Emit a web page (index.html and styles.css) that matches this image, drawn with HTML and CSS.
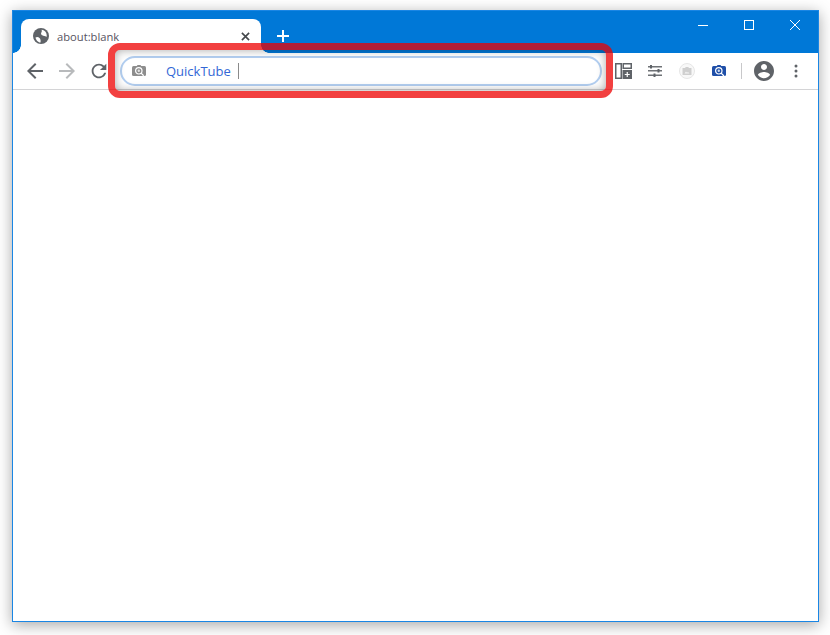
FILE: index.html
```html
<!DOCTYPE html>
<html lang="en">
<head>
    <meta charset="UTF-8">
    <title>about:blank</title>
    <link rel="stylesheet" href="styles.css">
</head>
<body>
    <div class="window">
        <!-- Title bar -->
        <div class="titlebar">
            <div class="tab">
                <svg class="tab-icon" viewBox="0 0 16 16"><circle cx="8" cy="8" r="8"/><path d="M2.500 9.500c1.500-1 3-.5 4 .5s1.500 2.500 1 4.500c-2.500 0-4.500-2.500-5-5zM8.500 1.800c2 .2 4 1.500 4.800 3.400.5 1.300.6 2.600.2 3.800-1.300-1.200-3-1-4.300-1.800-1.300-.7-1.500-2-.7-3 .5-.7.500-1.500 0-2.400z" class="land"/></svg>
                <span class="tab-title">about:blank</span>
                <svg class="tab-close" viewBox="0 0 10 10"><path d="M1 1l8 8M9 1l-8 8"/></svg>
            </div>
            <svg class="new-tab" viewBox="0 0 12 12"><path d="M6 0v12M0 6h12"/></svg>
            <div class="window-controls">
                <div class="win-btn"><svg viewBox="0 0 12 12"><path d="M1 6.500h10"/></svg></div>
                <div class="win-btn"><svg viewBox="0 0 12 12"><rect x="1.500" y="1.500" width="9" height="9"/></svg></div>
                <div class="win-btn"><svg viewBox="0 0 12 12"><path d="M1 1l10 10M11 1L1 11"/></svg></div>
            </div>
        </div>

        <!-- Toolbar -->
        <div class="toolbar">
            <div class="tool-btn"><svg class="nav-icon" viewBox="0 0 24 24"><path d="M20 11H7.830l5.590-5.590L12 4l-8 8 8 8 1.410-1.410L7.830 13H20v-2z"/></svg></div>
            <div class="tool-btn disabled"><svg class="nav-icon" viewBox="0 0 24 24"><path d="M4 11h12.170l-5.590-5.590L12 4l8 8-8 8-1.410-1.410L16.170 13H4v-2z"/></svg></div>
            <div class="tool-btn"><svg class="reload-icon" viewBox="0 0 24 24"><path d="M17.650 6.350A7.958 7.958 0 0 0 12 4c-4.420 0-7.990 3.580-7.990 8s3.570 8 7.990 8c3.730 0 6.840-2.550 7.730-6h-2.080A5.990 5.990 0 0 1 12 18c-3.310 0-6-2.690-6-6s2.690-6 6-6c1.660 0 3.140.690 4.220 1.780L13 11h7V4l-2.350 2.350z"/></svg></div>

            <div class="omnibox">
                <svg class="omni-icon" viewBox="0 0 14 12"><rect y="1" width="14" height="10" rx="1.500"/><path d="M4.500 1.500l1-1.500h3l1 1.500z"/><circle cx="6.800" cy="5.800" r="3.200" class="ring"/><circle cx="6.800" cy="5.800" r="1.200" class="dot"/><path d="M9.100 8.100l2.600 2.600" class="handle"/></svg>
                <span class="omni-text">QuickTube</span>
                <span class="caret"></span>
            </div>

            <div class="actions">
                <div class="tool-btn"><svg viewBox="0 0 17 16" class="panel-icon"><rect x="0.750" y="0.750" width="5.500" height="14.500" fill="none"/><rect x="8.250" y="0.750" width="8" height="4.500" fill="none"/><rect x="7.500" y="7" width="9.500" height="9" class="solid"/><path d="M12.250 9v5M9.750 11.500h5" class="plus"/></svg></div>
                <div class="tool-btn"><svg viewBox="0 0 14 12" class="tune-icon"><path d="M0 1.750h14M0 5.750h14M0 10.250h14" class="lines"/><rect x="2" y="0" width="2" height="3.500"/><rect x="9.500" y="4" width="2" height="3.500"/><rect x="5.500" y="8.500" width="2" height="3.500"/></svg></div>
                <div class="tool-btn"><svg viewBox="0 0 16 16" class="ext-gray"><circle cx="8" cy="8" r="7.500" fill="#f8f8f8" stroke="#e6e6e6"/><path d="M3.500 5h2.500l.8-1h2.400l.8 1h2.500v7h-9z" fill="#cfcfcf"/><path d="M5.500 10.500l1.500-2 1 1.200 1-.8 1.500 1.600z" fill="#f4f4f4"/></svg></div>
                <div class="tool-btn"><svg viewBox="0 0 14 12" class="ext-blue"><rect y="1" width="14" height="10" rx="1.500"/><path d="M4.500 1.500l1-1.500h3l1 1.500z"/><circle cx="6.800" cy="5.800" r="3.200" class="ring"/><circle cx="6.800" cy="5.800" r="1.200" class="dot"/><path d="M9.100 8.100l2.900 2.900" class="handle"/></svg></div>
            </div>
            <div class="separator"></div>
            <div class="tool-btn"><svg viewBox="0 0 24 24" class="account"><path d="M12 2C6.480 2 2 6.480 2 12s4.480 10 10 10 10-4.480 10-10S17.520 2 12 2zm0 3c1.660 0 3 1.340 3 3s-1.340 3-3 3-3-1.340-3-3 1.340-3 3-3zm0 14.200c-2.500 0-4.710-1.280-6-3.220.03-1.990 4-3.080 6-3.080 1.990 0 5.970 1.090 6 3.080-1.290 1.940-3.500 3.220-6 3.220z"/></svg></div>
            <div class="tool-btn"><svg viewBox="0 0 4 14" class="menu-dots"><circle cx="2" cy="2" r="1.500"/><circle cx="2" cy="7" r="1.500"/><circle cx="2" cy="12" r="1.500"/></svg></div>
        </div>

        <div class="content"></div>
    </div>

    <!-- Red highlight over the address bar -->
    <div class="highlight"></div>
</body>
</html>
```

FILE: styles.css
```css
body {
    margin: 0;
    padding: 10px 11px 13px 12px;
    height: 635px;
    box-sizing: border-box;
    background-color: #fff;
    font-family: 'Open Sans', sans-serif;
    overflow: hidden;
}

.window {
    display: flex;
    flex-direction: column;
    height: 100%;
    box-sizing: border-box;
    border: 1px solid #1a86e4;
    background-color: #fff;
    box-shadow: 0 3px 14px rgba(0, 0, 0, 0.35);
}

/* Title bar */
.titlebar {
    display: flex;
    align-items: flex-end;
    height: 42px;
    flex-shrink: 0;
    padding-left: 8px;
    background-color: #0078d7;
}

.tab {
    position: relative;
    display: flex;
    align-items: center;
    box-sizing: border-box;
    width: 240px;
    height: 34px;
    padding: 0 11px 0 12px;
    background-color: #fff;
    border-radius: 8px 8px 0 0;
}

.tab::before,
.tab::after {
    content: "";
    position: absolute;
    bottom: 0;
    width: 8px;
    height: 8px;
}

.tab::before {
    left: -8px;
    background: radial-gradient(circle at 0 0, transparent 7.5px, #fff 8px);
}

.tab::after {
    right: -8px;
    background: radial-gradient(circle at 100% 0, transparent 7.5px, #fff 8px);
}

.tab-icon {
    width: 16px;
    height: 16px;
    fill: #5f6368;
    flex-shrink: 0;
}

.tab-icon .land {
    fill: #fff;
}

.tab-title {
    flex: 1;
    margin-left: 8px;
    font-size: 11.2px;
    color: #57535f;
}

.tab-close {
    width: 9px;
    height: 9px;
    fill: none;
    stroke: #45484c;
    stroke-width: 1.8;
}

.new-tab {
    width: 12px;
    height: 12px;
    margin: 0 0 11px 16px;
    fill: none;
    stroke: #fff;
    stroke-width: 2;
}

.window-controls {
    display: flex;
    margin-left: auto;
    align-self: flex-start;
}

.win-btn {
    display: flex;
    align-items: center;
    justify-content: center;
    width: 46px;
    height: 28px;
}

.win-btn svg {
    width: 12px;
    height: 12px;
    fill: none;
    stroke: #fff;
    stroke-width: 1;
}

/* Toolbar */
.toolbar {
    display: flex;
    align-items: center;
    height: 37px;
    flex-shrink: 0;
    box-sizing: border-box;
    padding: 0 6px;
    border-bottom: 1px solid #d4d4d6;
    background-color: #fff;
}

.tool-btn {
    display: flex;
    align-items: center;
    justify-content: center;
    width: 32px;
    height: 32px;
    flex-shrink: 0;
}

.tool-btn svg {
    width: 20px;
    height: 20px;
    fill: #5f6368;
}

.tool-btn .nav-icon {
    width: 24px;
    height: 24px;
}

.tool-btn .reload-icon {
    width: 22px;
    height: 22px;
}

.tool-btn.disabled svg {
    fill: #b8babc;
}

.omnibox {
    display: flex;
    align-items: center;
    flex: 1;
    box-sizing: border-box;
    height: 30px;
    margin: 0 5px;
    padding-left: 10px;
    border: 2px solid #b3cff1;
    border-radius: 15px;
    background-color: #fff;
}

.omni-icon {
    width: 14px;
    height: 12px;
    fill: #8d8d8d;
    flex-shrink: 0;
}

.ring {
    fill: none;
    stroke: #fff;
    stroke-width: 1.2;
}

.dot {
    fill: #e4e4e4;
}

.handle {
    fill: none;
    stroke: #fff;
    stroke-width: 1.3;
}

.omni-text {
    margin-left: 20px;
    font-size: 13px;
    color: #3367d6;
}

.caret {
    width: 1px;
    height: 16px;
    margin-left: 7px;
    background-color: #8a8a8a;
}

.actions {
    display: flex;
}

.tool-btn .panel-icon {
    width: 17px;
    height: 16px;
    stroke: #5f6368;
    stroke-width: 1.5;
}

.panel-icon .solid {
    fill: #5f6368;
    stroke: none;
}

.panel-icon .plus {
    fill: none;
    stroke: #fff;
    stroke-width: 1.2;
}

.tool-btn .tune-icon {
    width: 14px;
    height: 12px;
}

.tune-icon .lines {
    fill: none;
    stroke: #6f7276;
    stroke-width: 1.5;
}

.tool-btn .ext-gray {
    width: 16px;
    height: 16px;
}

.tool-btn .ext-blue {
    width: 14px;
    height: 12px;
    fill: #1f4fa8;
}

.ext-blue .dot {
    fill: #cfdcf2;
}

.tool-btn .account {
    width: 24px;
    height: 24px;
}

.tool-btn .menu-dots {
    width: 4px;
    height: 14px;
}

.separator {
    width: 1px;
    height: 16px;
    margin: 0 6px;
    background-color: #c8c8ca;
}

.content {
    flex: 1;
    background-color: #fff;
}

/* Annotation */
.highlight {
    position: absolute;
    left: 108px;
    top: 43px;
    width: 505px;
    height: 55px;
    box-sizing: border-box;
    border: 7px solid rgba(238, 0, 0, 0.75);
    border-radius: 12px;
    box-shadow: inset 0 0 10px rgba(0, 0, 0, 0.35);
}
```
